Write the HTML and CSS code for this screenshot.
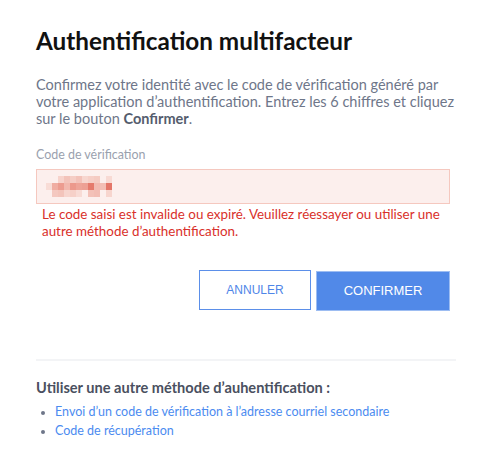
FILE: index.html
```html
<!DOCTYPE html>
<html lang="fr">
<head>
<meta charset="utf-8">
<title>Authentification multifacteur</title>
<link rel="stylesheet" href="styles.css">
</head>
<body>
<main class="page">
  <h1 class="title">Authentification multifacteur</h1>
  <p class="intro">Confirmez votre identité avec le code de vérification généré par votre application d’authentification. Entrez les 6 chiffres et cliquez sur le bouton <strong>Confirmer</strong>.</p>
  <form class="form">
    <label class="label" for="code">Code de vérification</label>
    <div class="input" id="code">
      <svg class="blur" width="68" height="22" viewBox="0 0 68 22">
        <g filter="url(#soft)">
          <rect x="12" y="0" width="6" height="7" fill="#f7d3cc"/>
          <rect x="18" y="0" width="6" height="7" fill="#f3c3ba"/>
          <rect x="24" y="0" width="6" height="7" fill="#f5cdc5"/>
          <rect x="30" y="0" width="6" height="7" fill="#f3c2b9"/>
          <rect x="36" y="0" width="6" height="7" fill="#f7d6cf"/>
          <rect x="42" y="0" width="6" height="7" fill="#f6cfc7"/>
          <rect x="48" y="0" width="6" height="7" fill="#f5cbc2"/>
          <rect x="60" y="0" width="6" height="7" fill="#f8dad4"/>
          <rect x="0" y="7" width="6" height="7" fill="#f8dcd6"/>
          <rect x="6" y="7" width="6" height="7" fill="#f0ada2"/>
          <rect x="12" y="7" width="6" height="7" fill="#ec9c90"/>
          <rect x="18" y="7" width="6" height="7" fill="#f2b8ae"/>
          <rect x="24" y="7" width="6" height="7" fill="#ec998c"/>
          <rect x="30" y="7" width="6" height="7" fill="#eea498"/>
          <rect x="36" y="7" width="6" height="7" fill="#eda094"/>
          <rect x="42" y="7" width="6" height="7" fill="#e57a6c"/>
          <rect x="48" y="7" width="6" height="7" fill="#f2bab1"/>
          <rect x="54" y="7" width="6" height="7" fill="#f3beb5"/>
          <rect x="60" y="7" width="6" height="7" fill="#e47669"/>
          <rect x="6" y="14" width="6" height="7" fill="#f4c8c0"/>
          <rect x="12" y="14" width="6" height="7" fill="#f3c4bb"/>
          <rect x="18" y="14" width="6" height="7" fill="#f7d5ce"/>
          <rect x="24" y="14" width="6" height="7" fill="#f6d0c8"/>
          <rect x="30" y="14" width="6" height="7" fill="#f8dbd5"/>
          <rect x="42" y="14" width="6" height="7" fill="#f3c1b8"/>
          <rect x="48" y="14" width="6" height="7" fill="#f2bdb4"/>
          <rect x="60" y="14" width="6" height="7" fill="#f7d5ce"/>
        </g>
        <defs><filter id="soft"><feGaussianBlur stdDeviation="0.6"/></filter></defs>
      </svg>
    </div>
    <p class="error">Le code saisi est invalide ou expiré. Veuillez réessayer ou utiliser une autre méthode d’authentification.</p>
    <div class="actions">
      <button type="button" class="btn btn-outline">ANNULER</button>
      <button type="button" class="btn btn-primary">CONFIRMER</button>
    </div>
  </form>
  <hr class="divider">
  <h2 class="alt-title">Utiliser une autre méthode d’auhentification :</h2>
  <ul class="alt-list">
    <li><a href="#">Envoi d’un code de vérification à l’adresse courriel secondaire</a></li>
    <li><a href="#">Code de récupération</a></li>
  </ul>
</main>
</body>
</html>
```

FILE: styles.css
```css
* { box-sizing: border-box; }
html, body { margin: 0; padding: 0; background: #fff; }
body { font-family: Lato, "Open Sans", sans-serif; }

.page {
  width: 495px;
  padding: 26px 35px 0 36px;
}

.title {
  margin: 0;
  font-size: 24.3px;
  line-height: 30px;
  font-weight: 700;
  color: #111;
}

.intro {
  margin: 20px 0 0;
  font-size: 14.5px;
  line-height: 17px;
  color: #6e7689;
}
.intro strong { color: #555d6d; font-weight: 700; }

.form {
  width: 414px;
  margin-top: 20px;
  display: flex;
  flex-direction: column;
}

.label {
  font-size: 12.45px;
  line-height: 16px;
  color: #9aa1ae;
}

.input {
  margin-top: 6px;
  height: 35px;
  background: #fcefed;
  border: 1px solid #f5c8bf;
  display: flex;
  align-items: center;
  padding-left: 9px;
}
.blur { display: block; }

.error {
  margin: 2px 0 0;
  padding-left: 6px;
  font-size: 13.4px;
  line-height: 17px;
  color: #d9302a;
}

.actions {
  display: flex;
  justify-content: flex-end;
  gap: 5px;
  margin-top: 29.5px;
}
.btn {
  font-family: "Liberation Sans", Arial, sans-serif;
  height: 40px;
  border-radius: 0;
  cursor: pointer;
}
.btn-outline {
  width: 112px;
  background: #fff;
  border: 1px solid #5b8fe9;
  color: #4f86e8;
  font-size: 12px;
}
.btn-primary {
  width: 134px;
  margin-top: 1px;
  background: #5189e8;
  border: 1px solid #9dbdf2;
  color: #fff;
  font-size: 13px;
}

.divider {
  margin: 48px 0 0;
  border: 0;
  height: 2px;
  background: #f3f4f6;
  width: 420px;
}

.alt-title {
  margin: 18px 0 0;
  font-size: 14.6px;
  line-height: 18px;
  font-weight: 700;
  color: #4a5060;
}

.alt-list {
  margin: 5px 0 0;
  padding-left: 19px;
  font-size: 12.5px;
  line-height: 19px;
  color: #6e7689;
}
.alt-list li::marker { font-size: 11px; }
.alt-list a { color: #4b8bf0; text-decoration: none; }
```
